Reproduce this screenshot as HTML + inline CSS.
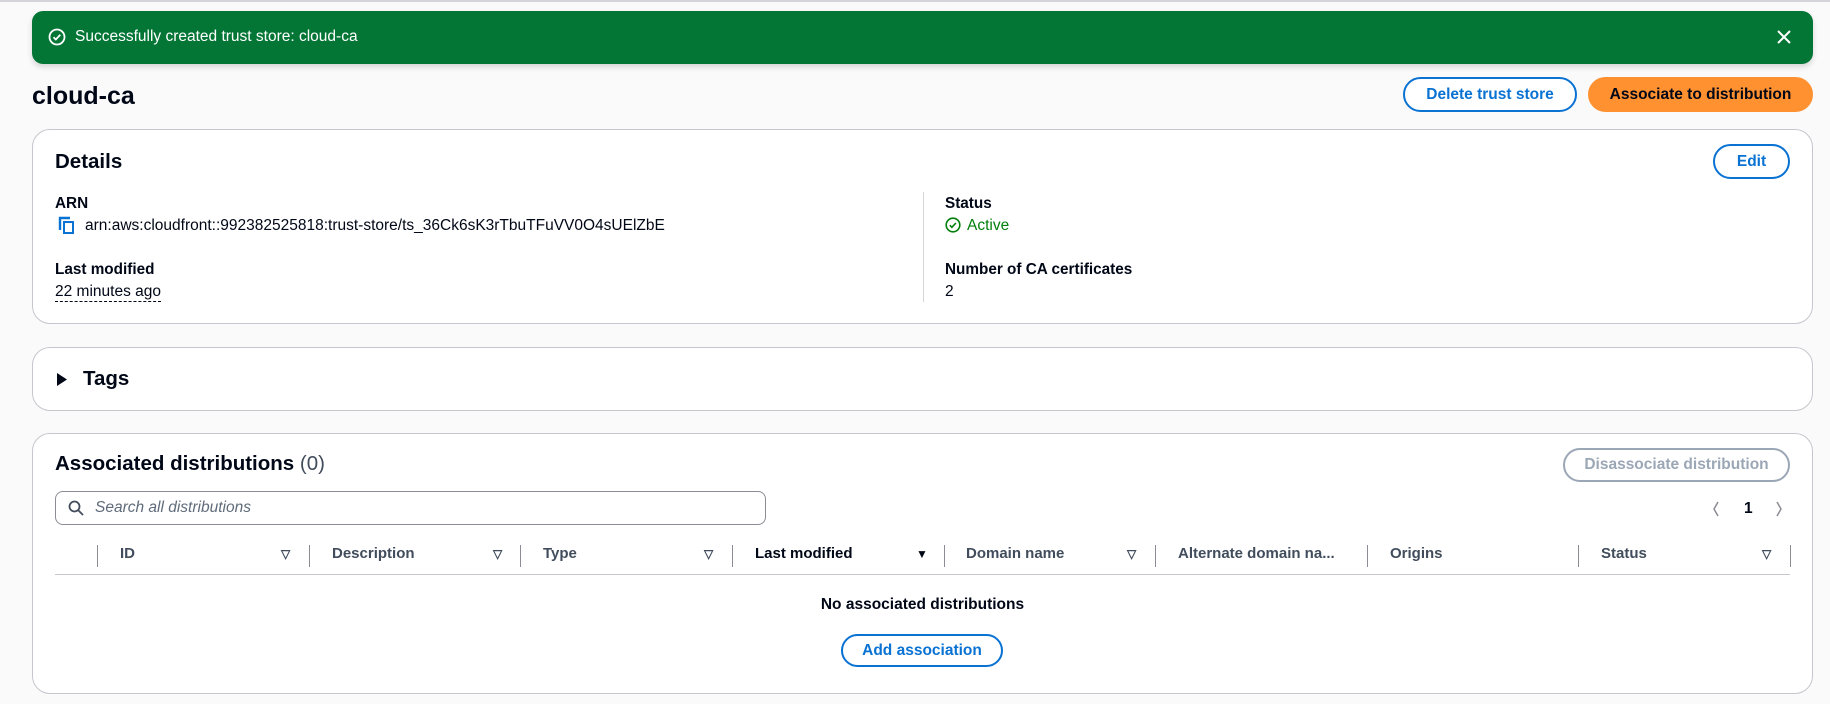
<!DOCTYPE html>
<html><head><meta charset="utf-8"><style>
*{box-sizing:border-box;margin:0;padding:0}
body{width:1830px;height:704px;background:#fafafa;font-family:"Liberation Sans",sans-serif;color:#000716;position:relative;overflow:hidden;font-size:15.5px}
.a{position:absolute;white-space:nowrap}
.topline{position:absolute;left:0;top:0;width:1830px;height:2px;background:#d5d5d9}
.flash{position:absolute;left:32px;top:11px;width:1781px;height:53px;background:#037636;border-radius:11px;box-shadow:0 3px 6px rgba(0,0,0,.15)}
.box{position:absolute;left:32px;width:1781px;background:#fff;border:1px solid #c6c6cd;border-radius:18px}
.btn{position:absolute;border:2px solid #0972d3;border-radius:20px;color:#0972d3;font-weight:bold;font-size:15.5px;display:flex;align-items:center;justify-content:center;background:#fff}
.lbl{font-weight:bold;font-size:15.3px}
.vd{position:absolute;top:545px;width:1px;height:22px;background:#8c8c94}
.th{position:absolute;top:545px;font-weight:bold;font-size:15px;color:#414d5c}
.fi{position:absolute;top:547px;font-size:12px;color:#414d5c;font-weight:bold}
</style></head><body>
<div class="topline"></div>
<div class="flash">
  <svg class="a" style="left:16px;top:17px" width="18" height="18" viewBox="0 0 18 18"><circle cx="9" cy="9" r="7.5" fill="none" stroke="#fff" stroke-width="1.8"/><path d="M5.5 9.2l2.3 2.3 4.5-4.8" fill="none" stroke="#fff" stroke-width="1.8"/></svg>
  <div class="a" style="left:43px;top:17px;color:#fff;font-size:15.5px">Successfully created trust store: cloud-ca</div>
  <svg class="a" style="left:1745px;top:19px" width="14" height="14" viewBox="0 0 14 14"><path d="M1 1l12 12M13 1L1 13" stroke="#fff" stroke-width="2"/></svg>
</div>
<div class="a" style="left:32px;top:82px;font-size:25px;font-weight:bold">cloud-ca</div>
<div class="btn" style="left:1403px;top:77px;width:174px;height:35px">Delete trust store</div>
<div class="btn" style="left:1588px;top:77px;width:225px;height:35px;background:#ff9131;border-color:#ff9131;color:#000716">Associate to distribution</div>

<div class="box" style="top:129px;height:195px"></div>
<div class="a" style="left:55px;top:150px;font-size:20.5px;font-weight:bold">Details</div>
<div class="btn" style="left:1713px;top:144px;width:77px;height:35px">Edit</div>
<div class="a lbl" style="left:55px;top:195px">ARN</div>
<svg class="a" style="left:58px;top:216px" width="17" height="19" viewBox="0 0 17 19"><path d="M2 14V2h10" fill="none" stroke="#0972d3" stroke-width="2.4"/><rect x="6" y="6" width="9" height="11" fill="none" stroke="#0972d3" stroke-width="2"/></svg>
<div class="a" style="left:85px;top:217px">arn:aws:cloudfront::992382525818:trust-store/ts_36Ck6sK3rTbuTFuVV0O4sUElZbE</div>
<div class="a lbl" style="left:55px;top:261px">Last modified</div>
<div class="a" style="left:55px;top:283px;border-bottom:1px dashed #000716;line-height:18px">22 minutes ago</div>
<div class="a" style="left:923px;top:192px;width:1px;height:110px;background:#d5d5d9"></div>
<div class="a lbl" style="left:945px;top:195px">Status</div>
<svg class="a" style="left:945px;top:217px" width="16" height="16" viewBox="0 0 16 16"><circle cx="8" cy="8" r="6.8" fill="none" stroke="#037f0c" stroke-width="1.6"/><path d="M4.8 8.2l2.1 2.1 4-4.3" fill="none" stroke="#037f0c" stroke-width="1.6"/></svg>
<div class="a" style="left:967px;top:217px;color:#037f0c">Active</div>
<div class="a lbl" style="left:945px;top:261px">Number of CA certificates</div>
<div class="a" style="left:945px;top:283px">2</div>

<div class="box" style="top:347px;height:64px"></div>
<svg class="a" style="left:57px;top:373px" width="10" height="13" viewBox="0 0 10 13"><path d="M0 0l10 6.5L0 13z" fill="#000716"/></svg>
<div class="a" style="left:83px;top:367px;font-size:20.5px;font-weight:bold">Tags</div>

<div class="box" style="top:433px;height:261px"></div>
<div class="a" style="left:55px;top:452px;font-size:20.5px;font-weight:bold">Associated distributions <span style="font-weight:normal;color:#414d5c">(0)</span></div>
<div class="btn" style="left:1563px;top:448px;width:227px;height:34px;border-color:#9ba7b6;color:#9ba7b6">Disassociate distribution</div>
<div class="a" style="left:55px;top:491px;width:711px;height:34px;border:1px solid #8c8c94;border-radius:8px;background:#fff"></div>
<svg class="a" style="left:68px;top:500px" width="16" height="16" viewBox="0 0 16 16"><circle cx="6.5" cy="6.5" r="5" fill="none" stroke="#414d5c" stroke-width="1.8"/><path d="M10 10l5 5" stroke="#414d5c" stroke-width="1.8"/></svg>
<div class="a" style="left:95px;top:499px;font-style:italic;color:#5f6b7a">Search all distributions</div>
<svg class="a" style="left:1712px;top:501px" width="8" height="16" viewBox="0 0 8 16"><path d="M6 1L2 8l4 7" fill="none" stroke="#8c8c94" stroke-width="1.5"/></svg>
<div class="a" style="left:1744px;top:500px;font-weight:bold">1</div>
<svg class="a" style="left:1775px;top:501px" width="8" height="16" viewBox="0 0 8 16"><path d="M2 1l4 7-4 7" fill="none" stroke="#8c8c94" stroke-width="1.5"/></svg>

<div class="vd" style="left:97px"></div><div class="vd" style="left:309px"></div><div class="vd" style="left:520px"></div><div class="vd" style="left:732px"></div><div class="vd" style="left:944px"></div><div class="vd" style="left:1155px"></div><div class="vd" style="left:1367px"></div><div class="vd" style="left:1578px"></div><div class="vd" style="left:1790px"></div>
<div class="th" style="left:120px">ID</div>
<div class="th" style="left:332px">Description</div>
<div class="th" style="left:543px">Type</div>
<div class="th" style="left:755px;color:#000716">Last modified</div>
<div class="th" style="left:966px">Domain name</div>
<div class="th" style="left:1178px">Alternate domain na...</div>
<div class="th" style="left:1390px">Origins</div>
<div class="th" style="left:1601px">Status</div>
<div class="fi" style="left:281px">&#9661;</div>
<div class="fi" style="left:493px">&#9661;</div>
<div class="fi" style="left:704px">&#9661;</div>
<div class="fi" style="left:916px;color:#000716">&#9660;</div>
<div class="fi" style="left:1127px">&#9661;</div>
<div class="fi" style="left:1762px">&#9661;</div>
<div class="a" style="left:55px;top:574px;width:1735px;height:1px;background:#c6c6cd"></div>
<div class="a" style="left:0;width:1845px;text-align:center;top:596px;font-weight:bold">No associated distributions</div>
<div class="btn" style="left:841px;top:634px;width:162px;height:33px">Add association</div>
</body></html>
